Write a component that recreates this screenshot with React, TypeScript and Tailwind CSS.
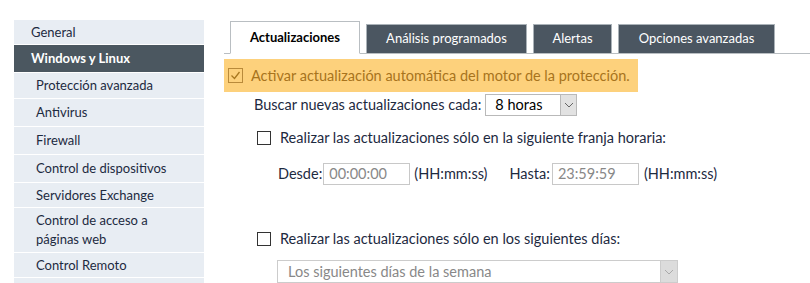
import React from "react";

const font = { fontFamily: "Lato, 'Noto Sans', sans-serif" };

function Check({ checked, tone = "dark" }: { checked?: boolean; tone?: "dark" | "amber" }) {
  if (tone === "amber") {
    return (
      <span className="w-[15px] h-[15px] border border-[#b98a3a] flex items-center justify-center shrink-0">
        {checked && (
          <svg width="11" height="11" viewBox="0 0 11 11">
            <path d="M1.5 5.5 L4.5 8.5 L9.5 2" fill="none" stroke="#a8781f" strokeWidth="1.3" />
          </svg>
        )}
      </span>
    );
  }
  return <span className="w-[14px] h-[14px] border border-[#333] bg-white shrink-0" />;
}

function Chevron({ color }: { color: string }) {
  return (
    <svg width="10" height="6" viewBox="0 0 10 6">
      <path d="M1 1 L5 5 L9 1" fill="none" stroke={color} strokeWidth="1" />
    </svg>
  );
}

const side = [
  { t: "General", h: "h-[24px]", kind: "top" },
  { t: "Windows y Linux", h: "h-[27px]", kind: "active" },
  { t: "Protección avanzada", h: "h-[25px]", kind: "sub" },
  { t: "Antivirus", h: "h-[27px]", kind: "sub" },
  { t: "Firewall", h: "h-[27px]", kind: "sub" },
  { t: "Control de dispositivos", h: "h-[27px]", kind: "sub" },
  { t: "Servidores Exchange", h: "h-[24px]", kind: "sub" },
  { t: "Control de acceso a páginas web", h: "h-[44px]", kind: "sub" },
  { t: "Control Remoto", h: "h-[24px]", kind: "sub" },
  { t: "", h: "h-[24px]", kind: "sub" },
];

export default function App() {
  return (
    <div className="w-[810px] h-[283px] bg-white overflow-hidden flex text-[#1d2a3f]" style={font}>
      <div className="w-[190px] ml-[14px] mt-[20px] flex flex-col gap-px shrink-0">
        {side.map((s, i) => (
          <div
            key={i}
            className={`${s.h} flex items-center shrink-0 text-[13px] leading-[19px] ${
              s.kind === "active"
                ? "bg-[#4b5760] text-white font-bold pl-[17px]"
                : s.kind === "top"
                ? "bg-[#e8edf3] pl-[17px]"
                : "bg-[#e8edf3] pl-[22px] pr-[20px]"
            }`}
          >
            {s.t}
          </div>
        ))}
      </div>

      <div className="ml-[20px] flex-1 flex flex-col">
        <div className="mt-[21px] flex items-end gap-[6px] pl-[6px] border-b border-[#b9bec2] h-[33px]">
          <div className="w-[130px] h-[33px] -mb-px bg-white border border-[#b9bec2] border-b-white flex items-center justify-center text-[13px] font-bold text-black">
            Actualizaciones
          </div>
          <div className="w-[161px] h-[29px] bg-[#4b5661] border border-[#aab2b8] border-b-0 flex items-center justify-center text-[13px] text-white">
            Análisis programados
          </div>
          <div className="w-[79px] h-[29px] bg-[#4b5661] border border-[#aab2b8] border-b-0 flex items-center justify-center text-[13px] text-white">
            Alertas
          </div>
          <div className="w-[157px] h-[29px] bg-[#4b5661] border border-[#aab2b8] border-b-0 flex items-center justify-center text-[13px] text-white">
            Opciones avanzadas
          </div>
        </div>

        <div className="mt-[5px] w-[414px] h-[35px] bg-[#fdd17c] flex items-center gap-[8px] pl-[4px] text-[14.5px] text-[#a8741d]">
          <Check checked tone="amber" />
          <span>Activar actualización automática del motor de la protección.</span>
        </div>

        <div className="mt-[2px] flex items-center pl-[30px] text-[14.5px] h-[22px]">
          <span>Buscar nuevas actualizaciones cada:</span>
          <div className="ml-[4px] w-[92px] h-[22px] border border-[#b9b9b9] flex items-center">
            <span className="flex-1 pl-[9px] text-black">8 horas</span>
            <span className="w-[16px] h-[20px] bg-[#e2e2e2] border-l border-[#b9b9b9] flex items-center justify-center">
              <Chevron color="#666" />
            </span>
          </div>
        </div>

        <div className="mt-[15px] flex items-center gap-[9px] pl-[33px] text-[14.5px] h-[14px]">
          <Check />
          <span>Realizar las actualizaciones sólo en la siguiente franja horaria:</span>
        </div>

        <div className="mt-[18px] flex items-center pl-[54px] text-[14.5px] h-[22px]">
          <span>Desde:</span>
          <div className="ml-[1px] w-[87px] h-[22px] border border-[#c8c8c8] flex items-center pl-[5px] text-[#888]">00:00:00</div>
          <span className="ml-[4px]">(HH:mm:ss)</span>
          <span className="ml-[22px]">Hasta:</span>
          <div className="ml-[2px] w-[87px] h-[22px] border border-[#c8c8c8] flex items-center pl-[5px] text-[#888]">23:59:59</div>
          <span className="ml-[5px]">(HH:mm:ss)</span>
        </div>

        <div className="mt-[47px] flex items-center gap-[9px] pl-[33px] text-[14.5px] h-[14px]">
          <Check />
          <span>Realizar las actualizaciones sólo en los siguientes días:</span>
        </div>

        <div className="mt-[14px] ml-[53px] w-[401px] h-[23px] border border-[#cccccc] flex items-center">
          <span className="flex-1 pl-[10px] text-[14.5px] text-[#888]">Los siguientes días de la semana</span>
          <span className="w-[17px] h-[21px] bg-[#dcdcdc] border-l border-[#cccccc] flex items-center justify-center">
            <Chevron color="#aaa" />
          </span>
        </div>
      </div>
    </div>
  );
}
